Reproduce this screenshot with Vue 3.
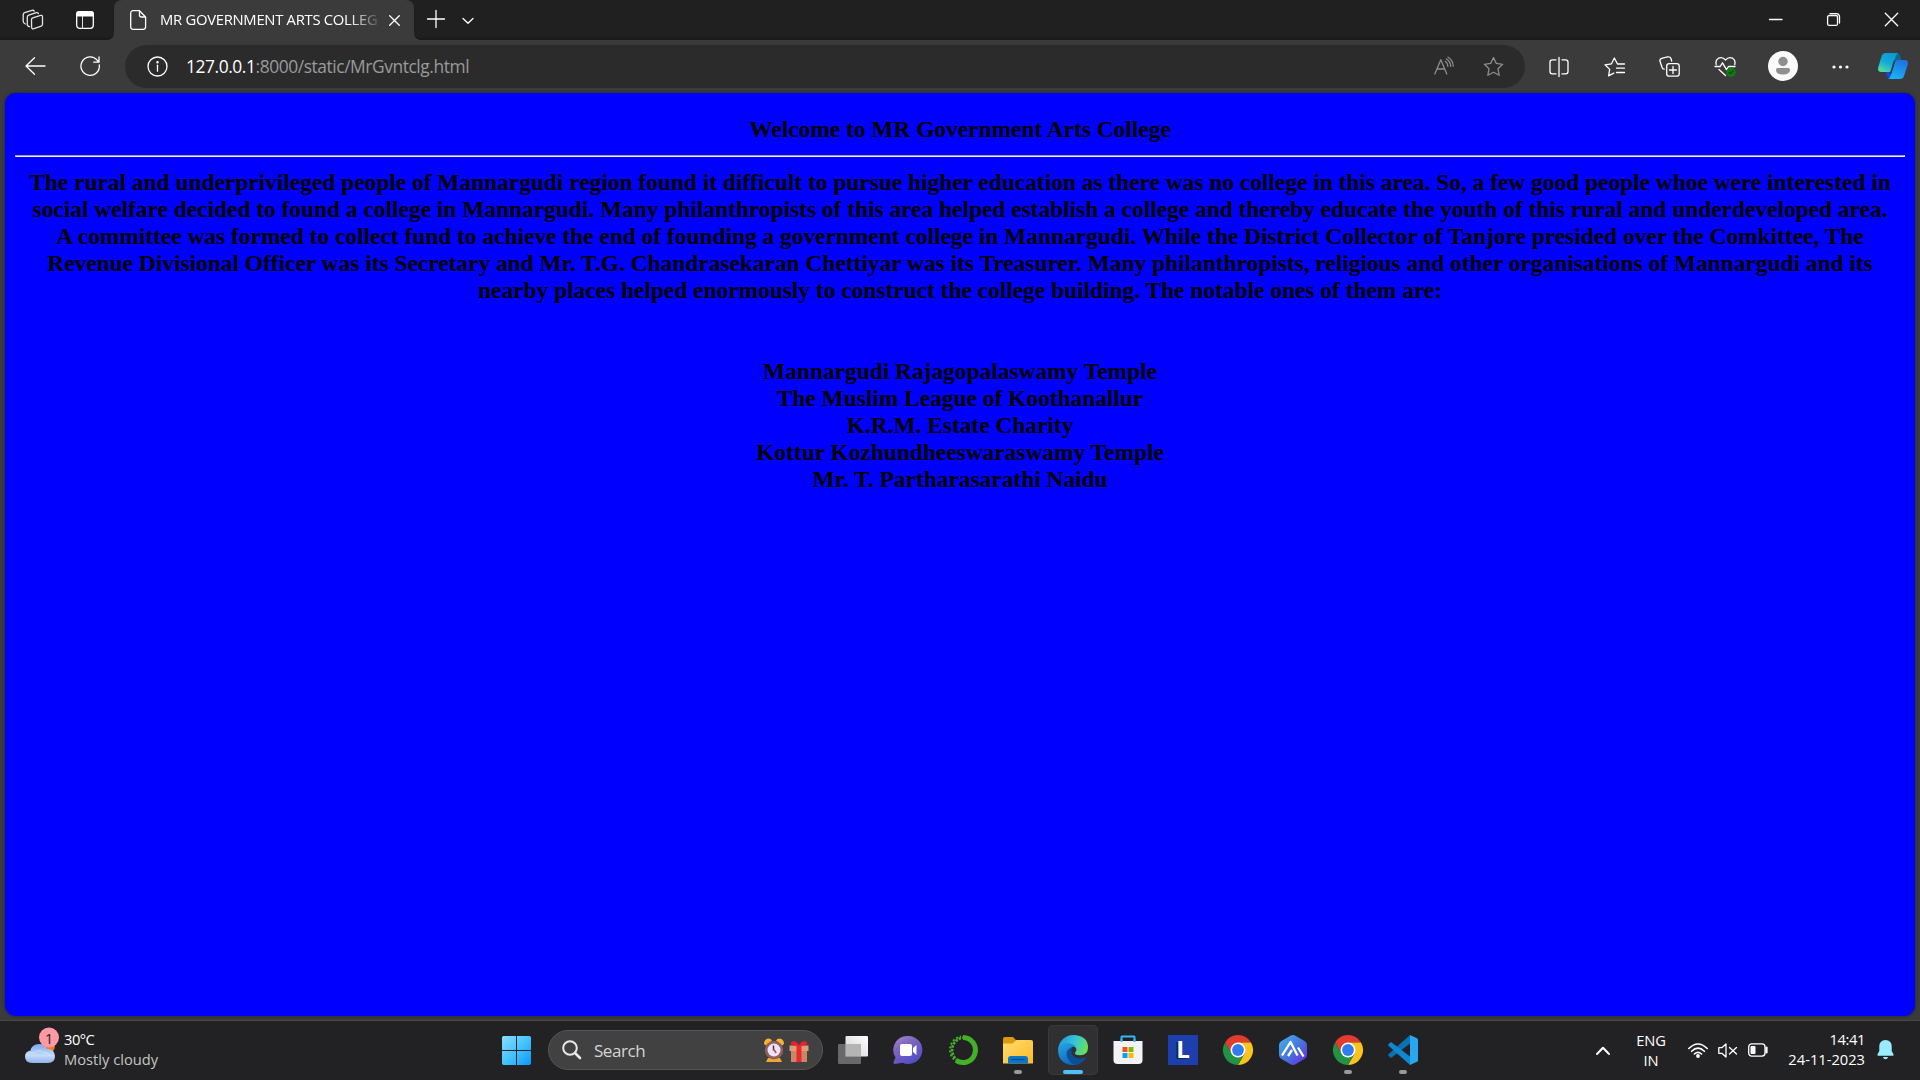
<script setup>
const story = [
  'The rural and underprivileged people of Mannargudi region found it difficult to pursue higher education as there was no college in this area. So, a few good people whoe were interested in',
  'social welfare decided to found a college in Mannargudi. Many philanthropists of this area helped establish a college and thereby educate the youth of this rural and underdeveloped area.',
  'A committee was formed to collect fund to achieve the end of founding a government college in Mannargudi. While the District Collector of Tanjore presided over the Comkittee, The',
  'Revenue Divisional Officer was its Secretary and Mr. T.G. Chandrasekaran Chettiyar was its Treasurer. Many philanthropists, religious and other organisations of Mannargudi and its',
  'nearby places helped enormously to construct the college building. The notable ones of them are:',
]
const donors = [
  'Mannargudi Rajagopalaswamy Temple',
  'The Muslim League of Koothanallur',
  'K.R.M. Estate Charity',
  'Kottur Kozhundheeswaraswamy Temple',
  'Mr. T. Partharasarathi Naidu',
]
const apps = [
  { icon: 'views' },
  { icon: 'chat' },
  { icon: 'anaconda' },
  { icon: 'folder', open: true },
  { icon: 'edge', active: true },
  { icon: 'store' },
  { icon: 'letter' },
  { icon: 'chrome' },
  { icon: 'hex' },
  { icon: 'chrome', open: true },
  { icon: 'code', open: true },
]
</script>

<template>
  <div class="screen">
    <header class="tabs">
      <svg class="workspaces line" width="22" height="22" viewBox="0 0 22 22">
        <path d="M9.5 10.5 Q9.5 9.2 10.8 8.8 L18.6 6.4 Q20.5 6 20.5 8 V15.3 Q20.5 16.8 19.2 17.2 L12 19.7 Q9.8 20.2 9.6 18.2 Z" />
        <path d="M7.5 17.6 Q5.3 17.3 5.3 15.2 V8.2 Q5.3 6.7 6.7 6.2 L14.3 3.6 Q15.8 3.3 16.4 4.6" />
        <path d="M3.3 15 Q1.2 14.2 1.2 12.3 V5.7 Q1.2 4.2 2.6 3.7 L10 1.3 Q11.6 1 12.2 2.1" />
      </svg>
      <svg class="panel" width="18" height="18" viewBox="0 0 18 18">
        <rect x=".7" y=".7" width="16.6" height="16.6" rx="3" fill="none" stroke="#fff" stroke-width="1.3" />
        <path d="M0 5.5V3a3 3 0 0 1 3-3h12a3 3 0 0 1 3 3v2.500Z" fill="#fff" />
        <path d="M6.500 5v12" stroke="#ddd" stroke-width="1" />
      </svg>
      <div class="tab">
        <svg class="line file" width="17" height="20" viewBox="0 0 17 20">
          <path d="M3 .7H9.500L15.600 7v9.800a2.500 2.500 0 0 1-2.500 2.500H3A2.300 2.300 0 0 1 .7 17V3A2.300 2.300 0 0 1 3 .7ZM9.500 .9V5a2 2 0 0 0 2 2h4" />
        </svg>
        <span class="title">MR GOVERNMENT ARTS COLLEGE</span>
        <svg class="line shut" width="11" height="11" viewBox="0 0 11 11"><path d="M.7 .7l9.600 9.600M10.300 .7L.7 10.300" /></svg>
      </div>
      <svg class="line plus" width="18" height="18" viewBox="0 0 18 18"><path d="M9 .500v17M.500 9h17" /></svg>
      <svg class="line down" width="12" height="8" viewBox="0 0 12 8"><path d="M1 1.500l5 4.800 5-4.800" /></svg>
      <div class="grow"></div>
      <svg class="line win" width="13" height="13" viewBox="0 0 13 13"><path d="M.5 6.500h12.500" /></svg>
      <svg class="line win" width="13" height="13" viewBox="0 0 13 13">
        <rect x=".6" y="2.500" width="9.900" height="9.900" rx="1.500" /><path d="M3 .6h6.500a3 3 0 0 1 3 3V10" />
      </svg>
      <svg class="line win" width="13" height="13" viewBox="0 0 13 13"><path d="M.3 .3l12.400 12.400M12.700 .3L.3 12.700" /></svg>
    </header>

    <nav class="toolbar">
      <svg class="line back" width="20" height="18" viewBox="0 0 20 18"><path d="M9.500 .8L1 9l8.500 8.200M1 9h19" /></svg>
      <svg class="line" width="21" height="21" viewBox="0 0 21 21"><path d="M19.300 9a9.200 9.200 0 1 1-2.100-4.800L19 6M13.700 6.200H19V.8" /></svg>
      <div class="address">
        <svg class="line" width="21" height="21" viewBox="0 0 21 21"><circle cx="10.500" cy="10.500" r="9.500" /><path d="M10.500 9.200v6" /><circle cx="10.500" cy="6.300" r=".6" fill="#fff" /></svg>
        <span class="url"><b>127.0.0.1</b>:8000/static/MrGvntclg.html</span>
        <div class="grow"></div>
        <svg class="line dim" width="20" height="20" viewBox="0 0 20 20">
          <path d="M.8 17L6.800 2.700 12.800 17M3 12h7.600M11.300 4.300q2.500 1.900 2.600 5M12.500 2q4 2.600 4.200 7.300M14 .2q5 3 5.200 9" />
        </svg>
        <svg class="line dim star" width="21" height="20" viewBox="0 0 21 20"><path d="M10.500 .5l2.800 5.900 6.400.9-4.700 4.500 1.200 6.500-5.700-3.100-5.700 3.100L6 11.800 1.300 7.300l6.400-.9Z" /></svg>
      </div>
      <svg class="line split" width="20" height="20" viewBox="0 0 20 20"><path d="M7 2.800H3.300A2.300 2.300 0 0 0 1 5v9.600a2.300 2.300 0 0 0 2.300 2.300H7M10 .5v19M13 2.800h3.700A2.300 2.300 0 0 1 19 5v9.600a2.300 2.300 0 0 1-2.300 2.300H13" /></svg>
      <svg class="line gap" width="21" height="20" viewBox="0 0 21 20"><path d="M20.500 7h-7L10.300 1 7.500 6.800l-6.500 1 4.700 4.600-1.100 6.400 5.200-2.700M12.500 11.200h8M12.500 15.500h8" /></svg>
      <svg class="line gap" width="21" height="21" viewBox="0 0 21 21">
        <rect x="7.700" y="7.700" width="12.500" height="12.500" rx="2.500" /><path d="M14 10.500v7M10.500 14h7M5.200 13.200Q3.400 13 3 11.300L1 5.300Q.5 3 2.700 2.300L8.500.9Q11.200.4 12 2.500l.7 2.700" />
      </svg>
      <svg class="line gap" width="21" height="21" viewBox="0 0 21 21">
        <path d="M1.200 8.500Q.2 4 3.500 2.200 7.500.3 10.500 4q3-3.700 7-1.800 3.300 1.800 2.300 6.300M0 10.500h5.200L7.500 6.800l4 6.800 2-3.100H20M4 13.500l6.500 6" />
        <circle cx="16" cy="16.300" r="4.700" fill="#107c10" stroke="none" /><path d="M14 16.500l1.500 1.300 2.700-2.900" stroke="#0a4e0a" />
      </svg>
      <svg class="avatar" width="30" height="30" viewBox="0 0 30 30">
        <circle cx="15" cy="15" r="15" fill="#fafafa" /><circle cx="15" cy="10.500" r="4.700" fill="#8f8f8f" />
        <path d="M8 18.700q0-1.700 1.700-1.700h10.600q1.700 0 1.700 1.700 0 4.800-7 4.800t-7-4.800" fill="#8f8f8f" />
      </svg>
      <svg class="dots" width="17" height="4" viewBox="0 0 17 4" fill="#fff"><circle cx="2" cy="2" r="1.600" /><circle cx="8.500" cy="2" r="1.600" /><circle cx="15" cy="2" r="1.600" /></svg>
      <svg class="copilot" width="30" height="26" viewBox="0 0 30 26">
        <defs>
          <linearGradient id="cpA" x1=".7" y1="0" x2=".2" y2="1"><stop stop-color="#079bd6" /><stop offset=".5" stop-color="#12a9d8" /><stop offset="1" stop-color="#55dfa0" /></linearGradient>
          <linearGradient id="cpB" x1=".7" y1="0" x2=".3" y2="1"><stop stop-color="#2170e0" /><stop offset="1" stop-color="#18b4f5" /></linearGradient>
        </defs>
        <path d="M15 0h4q2.500 0 3.300 3L23.500 7H16Z" fill="#0a6890" />
        <path d="M8 19h8l-3 7q-3.500 0-4.500-3.500Z" fill="#1b45dd" />
        <path d="M7.500 0H20q-1.700 1-2.500 4l-3.800 13q-.6 2-2.700 2H3.500Q-.5 19 .2 14.500L3.500 3.500Q4.500 0 7.500 0" fill="url(#cpA)" />
        <path d="M22 26H10q2-1 2.800-4l3.600-12.500q.7-2.500 3-2.500H27q3.700 0 2.800 4.500L26 23q-1 3-4 3" fill="url(#cpB)" />
        <path d="M16.500 8l-4 13" stroke="#2b3a4a" stroke-width="1.600" />
      </svg>
    </nav>

    <main class="frame">
      <article class="page">
        <h3>Welcome to MR Government Arts College</h3>
        <hr />
        <div class="copy"><p v-for="(line, i) in story" :key="i">{{ line }}</p></div>
        <div class="copy donors"><p v-for="name in donors" :key="name">{{ name }}</p></div>
      </article>
    </main>

    <footer class="taskbar">
      <div class="weather">
        <svg width="36" height="38" viewBox="0 0 36 38">
          <defs><linearGradient id="cloud" x1="0" y1="0" x2="0" y2="1"><stop stop-color="#7ca8ee" /><stop offset=".6" stop-color="#c4dbfa" /><stop offset="1" stop-color="#8fb2ec" /></linearGradient></defs>
          <circle cx="23" cy="19" r="7" fill="#f57c14" />
          <path d="M7 36q-7-.5-7-6.500 0-5 5.500-6Q7 17 14 17q5 0 8 5 7-1 8 7 0 7-7 7Z" fill="url(#cloud)" />
          <path d="M1 28q3-4 8-2 3-4 9-1 5 0 7 4" fill="none" stroke="#eaf3ff" stroke-opacity=".5" />
          <circle cx="24" cy="10.500" r="10" fill="#ff99a4" />
        </svg>
        <span class="badge">1</span>
        <div class="conditions"><span class="temp">30°C</span><span class="sky">Mostly cloudy</span></div>
      </div>
      <svg class="start" width="29" height="29" viewBox="0 0 29 29">
        <defs><linearGradient id="win" x1="0" y1="0" x2="1" y2="1"><stop stop-color="#87e0ff" /><stop offset=".55" stop-color="#3fc0fd" /><stop offset="1" stop-color="#0d95f8" /></linearGradient></defs>
        <path d="M1.200 0H14v14H0V1.200ZM15 0h12.800L29 1.200V14H15ZM0 15h14v14H1.200L0 27.800ZM15 15h14v12.800L27.800 29H15Z" fill="url(#win)" />
      </svg>
      <div class="search">
        <svg width="19" height="20" viewBox="0 0 19 20" fill="none" stroke="#e8e8e8"><circle cx="8" cy="8" r="6.800" stroke-width="2" /><path d="M13 13l5 5" stroke-width="2.600" stroke-linecap="round" /></svg>
        <span>Search</span>
        <div class="grow"></div>
        <svg width="20" height="25" viewBox="0 0 20 25">
          <path d="M0 6Q0 1 4.500.5 7 .5 8 2.500L2 7.500ZM20 6Q20 1 15.500.5 13 .5 12 2.500l6 5Z" fill="#f6b32c" />
          <path d="M4 20h12l2 4H2Z" fill="#f2a530" /><circle cx="10" cy="12" r="9.200" fill="#925f5c" /><circle cx="10" cy="12" r="6.500" fill="#e9e4fa" />
          <path d="M9.500 7.500v5" stroke="#333" stroke-width="1.400" /><path d="M9.500 11l2.700 4" stroke="#ef3350" stroke-width="1.500" />
        </svg>
        <svg class="gift" width="20" height="21" viewBox="0 0 20 21">
          <path d="M2 9h16v12H2Z" fill="#cb8763" /><path d="M.5 4.500h19v5.500H.5Z" fill="#df9d77" />
          <path d="M7.500 4h5v17h-5Z" fill="#e92832" /><path d="M10 4.500Q2 5 1.700 2.500 2 0 5 .3 8 .5 10 4.500 12 .5 15 .3q3-.3 3.300 2.200Q18 5 10 4.500" fill="#ef1f2c" />
        </svg>
      </div>
      <div class="apps">
        <div v-for="(app, i) in apps" :key="i" class="app" :class="{ active: app.active, open: app.open }">
          <svg v-if="app.icon === 'views'" width="30" height="30" viewBox="0 0 30 30">
            <defs><linearGradient id="tv" x1="1" y1="0" x2="0" y2="1"><stop stop-color="#fff" /><stop offset="1" stop-color="#d2d2d2" /></linearGradient></defs>
            <rect x="7.500" y="1" width="22.500" height="20.500" rx="1" fill="url(#tv)" /><rect y="9" width="23" height="20" rx="1" fill="#777" fill-opacity=".82" /><path d="M7.500 9H23v12.500H7.500Z" fill="#b4b4b4" />
          </svg>
          <svg v-else-if="app.icon === 'chat'" width="30" height="30" viewBox="0 0 30 30">
            <defs><linearGradient id="ch" x1="0" y1="0" x2=".6" y2="1"><stop stop-color="#a58bd8" /><stop offset=".4" stop-color="#8066bd" /><stop offset="1" stop-color="#514dc8" /></linearGradient></defs>
            <path d="M15.500 1a14 14 0 1 1-6 26.700L2 29q-2 0-1.500-2l2-4.500A14 14 0 0 1 15.500 1" fill="url(#ch)" />
            <rect x="7" y="9" width="12" height="12" rx="2" fill="#fff" /><path d="M20 13l3.500-3v10L20 17Z" fill="#fff" />
          </svg>
          <svg v-else-if="app.icon === 'anaconda'" width="30" height="30" viewBox="0 0 30 30" fill="none" stroke="#43b02a">
            <path d="M15 2.500a12.500 12.500 0 1 1-7 22.900" stroke-width="5" /><path d="M10 25.600a12.500 12.500 0 0 1 5-23" stroke-width="2.600" stroke-dasharray="2.500 1.200" />
            <path d="M6 24.500A13.700 13.700 0 0 1 13 1.400" stroke-width="2" stroke-dasharray="2 2" />
          </svg>
          <svg v-else-if="app.icon === 'folder'" width="30" height="30" viewBox="0 0 30 30">
            <defs><linearGradient id="fo" x1="0" y1="0" x2="1" y2="1"><stop stop-color="#ffdc70" /><stop offset="1" stop-color="#fdba25" /></linearGradient></defs>
            <path d="M0 4q0-2 2-2h8l3.500 3.500H28V12H0Z" fill="#dc9a08" /><path d="M0 8.500h9.500l4-3.500H28q2 0 2 2v21.500H0Z" fill="url(#fo)" />
            <path d="M5 28.500V24q0-3 3-3h14q3 0 3 3v4.500Z" fill="#0b76ca" /><path d="M8.500 24.500h13" stroke="#064b89" stroke-width="1.200" />
          </svg>
          <svg v-else-if="app.icon === 'edge'" width="30" height="30" viewBox="0 0 30 30">
            <defs>
              <linearGradient id="eg" x1="0" y1=".3" x2="1" y2=".6"><stop stop-color="#2196dc" /><stop offset=".5" stop-color="#36c4d9" /><stop offset="1" stop-color="#69e350" /></linearGradient>
              <linearGradient id="eb" x1="0" y1="0" x2=".5" y2="1"><stop stop-color="#26a7e5" /><stop offset="1" stop-color="#1065b9" /></linearGradient>
            </defs>
            <path d="M.3 13A15 15 0 0 1 15 0q15 .5 15 12.500 0 7.500-8 7.700-6 0-5-2.700 2.500-2.500.5-5Q14 9 8 10 3 11 .3 15Z" fill="url(#eg)" />
            <path d="M0 14.500Q2.500 7.500 10 8q6 .5 8.500 5-3-2.500-5.700 0Q10 18 13 23q4 5 10 4.500-4 3-9 2.500Q0 28.500 0 14.500" fill="url(#eb)" />
            <path d="M12.800 13Q7.500 15 8.800 21q2 6.500 8.200 8.900Q24 29 27.800 23q.5-1.300-1-.6-7 3-11.800-1.700-2.800-3-1-7.700Z" fill="#0d4f96" />
          </svg>
          <svg v-else-if="app.icon === 'store'" width="30" height="30" viewBox="0 0 30 30">
            <path d="M8.500 7V2q0-.5.500-.500h12q.500 0 .500.500v5" fill="none" stroke="#35b8f1" stroke-width="2" /><path d="M.5 6h29v19q0 4-4 4h-21q-4 0-4-4Z" fill="#f3f3f3" />
            <path d="M8.500 4v3M21.500 4v3" stroke="#35b8f1" stroke-width="2" />
            <path d="M9.500 12h5v5h-5Z" fill="#f25022" /><path d="M15.500 12h5v5h-5Z" fill="#7fba00" /><path d="M9.500 18h5v5h-5Z" fill="#00a4ef" /><path d="M15.500 18h5v5h-5Z" fill="#ffb900" />
          </svg>
          <div v-else-if="app.icon === 'letter'" class="letter">L</div>
          <svg v-else-if="app.icon === 'chrome'" width="30" height="30" viewBox="0 0 30 30">
            <path d="M2 7.500A15 15 0 0 1 28 7.500H15L8.500 18.700Z" fill="#e33b2e" /><path d="M28 7.500A15 15 0 0 1 15 30L21.500 18.700 15 7.500Z" fill="#fcc31e" /><path d="M15 30A15 15 0 0 1 2 7.500L8.500 18.700H21.500Z" fill="#229344" />
            <circle cx="15" cy="15" r="7.500" fill="#fff" /><circle cx="15" cy="15" r="5.900" fill="#2f7cf0" />
          </svg>
          <svg v-else-if="app.icon === 'hex'" width="30" height="30" viewBox="0 0 30 30">
            <defs><linearGradient id="hx" x1="0" y1="0" x2="1" y2="1"><stop stop-color="#43b5ef" /><stop offset=".5" stop-color="#4478dc" /><stop offset="1" stop-color="#6b24e3" /></linearGradient></defs>
            <path d="M12.500.8q2.500-1.400 5 0l9 5.300q2.500 1.500 2.500 4v9.800q0 2.700-2.500 4l-9 5.300q-2.500 1.400-5 0l-9-5.300Q1 22.600 1 19.900v-9.800q0-2.500 2.500-4Z" fill="url(#hx)" />
            <path d="M4 20.500L12.500 7l7 13.500M10 21l4-6M20 12.500l5.500 9" fill="none" stroke="#fff" stroke-width="2.300" stroke-linejoin="round" />
          </svg>
          <svg v-else width="30" height="30" viewBox="0 0 30 30">
            <path d="M22 0v8.500L4 22.300q-1 .7-1.700.1l-1.800-1.700q-.7-.7 0-1.500Z" fill="#0872b4" /><path d="M22 30v-8.500L4 7.700Q3 7 2.300 7.600L.5 9.300q-.7.7 0 1.500Z" fill="#1088cf" /><path d="M22 0l7 3.200q1 .5 1 1.600v20.400q0 1.100-1 1.600L22 30Z" fill="#28a6f0" />
          </svg>
        </div>
      </div>
      <div class="grow"></div>
      <div class="tray">
        <svg class="line up" width="14" height="9" viewBox="0 0 14 9"><path d="M1 8l6-6.300L13 8" stroke-width="2" /></svg>
        <div class="lang"><span>ENG</span><span>IN</span></div>
        <svg class="line wifi" width="20" height="15" viewBox="0 0 20 15"><path d="M.8 5.500Q10-3.500 19.200 5.500M3.600 8.300q6.400-6.200 12.800 0M6.400 11q3.600-3.400 7.200 0" stroke-width="1.600" /><circle cx="10" cy="13" r="1.900" fill="#fff" stroke="none" /></svg>
        <svg class="line vol" width="20" height="15" viewBox="0 0 20 15"><path d="M.8 4.700h3L8 .9v13.200l-4.200-3.800h-3ZM11.500 4.500l7 6.500M18.500 4.500l-7 6.500" /></svg>
        <svg class="line batt" width="20" height="14" viewBox="0 0 20 14"><rect x=".7" y=".9" width="16.300" height="12.200" rx="3" /><rect x="2.500" y="3" width="5" height="8" rx="1" fill="#fff" stroke="none" /><path d="M18.500 4.500v5" stroke-width="2.200" /></svg>
        <div class="clock"><span>14:41</span><span class="date">24-11-2023</span></div>
        <svg width="17" height="20" viewBox="0 0 17 20" fill="#99ebff"><path d="M8.500 0q6 0 6.200 6.500V11l1.900 3.500q.3 1.300-1 1.300H1.400q-1.300 0-1-1.300L2.300 11V6.500Q2.500 0 8.500 0M6 17h5q-.5 2.300-2.500 2.300T6 17" /></svg>
      </div>
    </footer>
  </div>
</template>

<style>
body { margin: 0; background: #3b3b3b; overflow: hidden; }
</style>

<style scoped>
.screen { width: 1920px; height: 1080px; display: flex; flex-direction: column; background: #3b3b3b; font-family: "Open Sans", "Noto Sans", sans-serif; color: #fff; overflow: hidden; white-space: nowrap; }
svg { display: block; flex: none; overflow: visible; }
.line { fill: none; stroke: #fff; stroke-width: 1.3; stroke-linejoin: round; stroke-linecap: round; }
.grow { flex: 1; }

.tabs { height: 40px; flex: none; display: flex; align-items: center; background: linear-gradient(#202020 36px, #191919); box-sizing: border-box; padding-right: 22px; }
.workspaces { margin-left: 22px; stroke: #e4e4e4; }
.panel { margin-left: 32px; }
.tab { position: relative; width: 300px; height: 40px; margin-left: 20px; box-sizing: border-box; padding-left: 16px; display: flex; align-items: center; background: #3b3b3b; border-radius: 8px 8px 0 0; }
.tab::before, .tab::after { content: ""; position: absolute; bottom: 0; width: 6px; height: 6px; }
.tab::before { left: -6px; background: radial-gradient(circle at 0 0, transparent 5.5px, #3b3b3b 6px); }
.tab::after { right: -6px; background: radial-gradient(circle at 100% 0, transparent 5.5px, #3b3b3b 6px); }
.title { width: 218px; margin-left: 13px; margin-top: -2px; overflow: hidden; font-size: 14.8px; line-height: 22px; letter-spacing: -0.28px; mask-image: linear-gradient(90deg, #000 190px, transparent 222px); }
.shut { margin-left: 11px; }
.plus { margin-left: 13px; margin-top: -2px; }
.down { margin-left: 17px; margin-top: 2px; }
.win { margin-left: 45px; margin-top: -1px; }

.toolbar { height: 53px; flex: none; display: flex; align-items: center; }
.back { margin-left: 25px; margin-right: 35px; margin-top: -2px; }
.address { width: 1400px; height: 43px; margin-left: 24px; box-sizing: border-box; padding: 0 21px 0 22px; display: flex; align-items: center; border-radius: 22px; background: #2b2b2b; }
.url { margin-left: 18px; margin-top: -1px; font-size: 17.4px; letter-spacing: -0.43px; color: #9a9a9a; }
.url b { font-weight: 400; color: #fff; }
.dim { stroke: #8d8d8d; }
.star { margin-left: 29px; }
.split { margin-left: 24px; }
.gap { margin-left: 34.5px; }
.avatar { margin-left: 32.5px; margin-top: -1px; }
.dots { margin-left: 33.5px; }
.copilot { margin-left: 29px; margin-top: -1px; }

.frame { height: 927px; flex: none; box-sizing: border-box; padding: 0 5px 4px; }
.page { height: 923px; box-sizing: border-box; padding: 23px 10px 0; border-radius: 11px; background: #00f; box-shadow: 0 0 3px #222; color: #000; font-family: "Liberation Serif", serif; font-size: 23.4px; font-weight: 700; line-height: 27px; text-align: center; }
.page h3 { margin: 0; font-size: 23.4px; line-height: 27px; }
.page hr { height: 0; margin: 12px 0; border: 1px solid; border-color: #9a9aa8 #eee #eee #9a9aa8; }
.page p { margin: 0; }
.donors { margin-top: 54px; }

.taskbar { height: 60px; flex: none; box-sizing: border-box; border-top: 1px solid #484848; padding-bottom: 1px; display: flex; align-items: center; background: #222224; }
.weather { position: relative; width: 477px; display: flex; align-items: center; margin-left: 25px; }
.weather svg { margin-top: -9px; }
.badge { position: absolute; left: 14px; top: -4px; width: 20px; text-align: center; color: #222; font-size: 15px; line-height: 20px; }
.conditions, .lang, .clock { display: flex; flex-direction: column; font-size: 14.7px; line-height: 20px; }
.conditions { margin-left: 3px; margin-top: -3px; }
.temp { letter-spacing: -0.5px; }
.sky { color: #c5c5c5; letter-spacing: 0; }
.search { width: 275px; height: 40px; margin-left: 17px; box-sizing: border-box; padding: 0 13px 0 13px; border: 1px solid #555; border-radius: 20px; background: #414142; display: flex; align-items: center; }
.search span { margin-left: 13px; font-size: 17px; letter-spacing: -0.45px; color: #d5d5d5; }
.gift { margin: 2px 0 0 5px; }
.apps { display: flex; gap: 5px; margin-left: 5px; }
.app { position: relative; width: 50px; height: 50px; box-sizing: border-box; display: flex; align-items: center; justify-content: center; border-radius: 5px; }
.active { background: #303032; box-shadow: inset 0 0 0 1px #393939; }
.open::after, .active::after { content: ""; position: absolute; bottom: 1px; left: 21px; width: 8px; height: 4px; border-radius: 2px; background: #999; }
.active::after { left: 15px; width: 20px; background: #4cc2ff; }
.letter { width: 30px; height: 30px; background: #1d3fae; font: 700 24px/27px "Open Sans", sans-serif; text-align: center; text-shadow: -2px 1px #102851; }
.tray { display: flex; align-items: center; margin-right: 26px; }
.lang { width: 40px; margin-left: 21px; text-align: center; margin-top: -1px; letter-spacing: -0.1px; }
.wifi { margin-left: 17px; }
.vol { margin-left: 10px; }
.batt { margin-left: 10px; }
.clock { width: 88px; margin: -3px 12px 0 9px; text-align: right; letter-spacing: -0.4px; }
.date { letter-spacing: 0; }
</style>
